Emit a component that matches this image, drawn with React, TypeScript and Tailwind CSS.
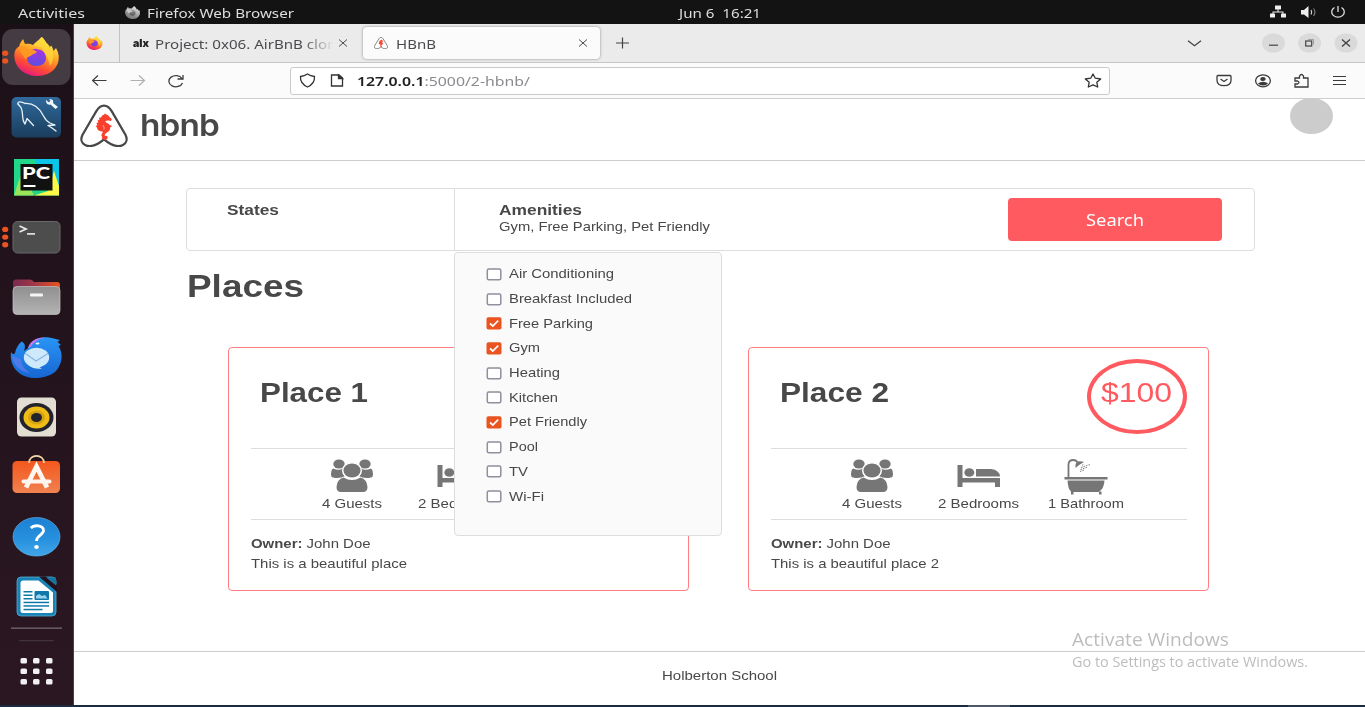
import { useLayoutEffect, useRef, type ReactNode } from "react";

/** Single line of text stretched horizontally to fill the given width. */
function Fit({ w, className = "", children }: { w: number; className?: string; children: ReactNode }) {
  const ref = useRef<HTMLSpanElement>(null);
  useLayoutEffect(() => {
    const el = ref.current;
    if (!el) return;
    el.style.transform = "none";
    el.style.transform = `scaleX(${w / el.getBoundingClientRect().width})`;
  }, [w]);
  return (
    <span className="block shrink-0" style={{ width: w }}>
      <span ref={ref} className={`block w-max origin-left whitespace-pre ${className}`}>
        {children}
      </span>
    </span>
  );
}

const UI = "font-['Noto_Sans',sans-serif]";

function FirefoxShape({ gray = false }: { gray?: boolean }) {
  const id = gray ? "g" : "c";
  const c = gray
    ? ["#e8e8e8", "#b5b5b5", "#8a8a8a", "#777"]
    : ["#fff44f", "#ffa225", "#ff4b34", "#e31587"];
  return (
    <>
      <defs>
        <linearGradient id={`fb${id}`} x1="0.75" y1="0.05" x2="0.3" y2="1">
          <stop offset="0" stopColor={c[0]} />
          <stop offset="0.4" stopColor={c[1]} />
          <stop offset="0.72" stopColor={c[2]} />
          <stop offset="1" stopColor={c[3]} />
        </linearGradient>
        <linearGradient id={`fg${id}`} x1="0.5" y1="0" x2="0.4" y2="1">
          <stop offset="0" stopColor={gray ? "#999" : "#a833e0"} />
          <stop offset="1" stopColor={gray ? "#555" : "#5b4fe0"} />
        </linearGradient>
      </defs>
      <path
        fill={`url(#fb${id})`}
        d="M0.4 20C0 14 2 11 5 9.500L6 6.500L9 2L11 7C14 6.500 17 7 19 8C21 5 25 3.500 27.500 0C30 1 31 5 34.500 8L35.500 11L37 8.500C38.500 10 39.500 13 39.500 14L42 11C45 16 45.500 21 44 26C41 34 33 39 23.500 39C11 39 1 31 0.400 20Z"
      />
      <path
        fill={`url(#fg${id})`}
        d="M14 16C18 12 22 11 24 12.500C28 12 32 16 32 21C32 26 28 29 22.500 29C17 29 13 26 13 21.500C13 19 16 19 18 18C17 17 15 17 14 16Z"
      />
      <path
        fill={gray ? "#c9c9c9" : "#ff9822"}
        d="M5 9.500C9 9 13 9.500 15 13C18 12 21 13 23 15C21 17 18 17 16.500 19C14 20 12 20 12.500 23C9 19 6 15 5 9.500Z"
      />
      {!gray && <path fill="#ffd83b" d="M27.500 0C30 1 31 5 34.500 8C40 13 41 22 36 29C35 22 31 17 28 11C25 9 21 9 20 8.500C22 5 26 4 27.500 0Z" opacity="0.75" />}
    </>
  );
}

function HbnbMark() {
  return (
    <>
      <path
        d="M23.500 1.500C27 1.500 29 3.500 31 7L44.500 30C46.500 34 46 38 42 40C36 43 30 40 23.500 34.500C17 40 11 43 5 40C1 38 0.500 34 2.500 30L16 7C18 3.500 20 1.500 23.500 1.500Z"
        fill="#fff"
        stroke="#484848"
        strokeWidth="2.200"
      />
      <path
        d="M22 11C23.500 10.800 24 10 24.500 9C25 10 25.500 10.200 26.500 10.500C28.500 11 28.500 13 31 14.500C31.500 16 30 17 28.500 16.200C27 15.800 25.500 16 24.800 16.800C25 18.500 28 18.500 29 20.500L31.500 21.500L29.500 23C29.800 26.500 26.500 27.500 24.500 29.500C23.500 31 25 31.500 26 31C27.800 32 27.500 35 24.500 35C22 35 20.800 33.500 21.800 32C19.800 30.500 22 28.500 22.500 27C19 27 16.800 25.500 16.500 23L15.500 21.500L17 20.500L16 18.500L18 18L17.200 16L19 15.500L18.500 13.500L20.500 13.200Z"
        fill="#f8402c"
      />
      <path d="M22.500 20.500Q24 22.500 23.500 25" fill="none" stroke="#fff" strokeWidth="0.500" />
    </>
  );
}

function DockIcon({ children, dots = 0, active = false }: { children: ReactNode; dots?: number; active?: boolean }) {
  const start = 30 - (dots - 1) * 3.8;
  return (
    <svg width="74" height="60" viewBox="0 0 74 60" className="block">
      {active && <rect x="2" y="2" width="68.500" height="56" rx="11" fill="#453b42" />}
      {Array.from({ length: dots }, (_, i) => (
        <ellipse key={i} cx="5.200" cy={start + i * 7.7} rx="3.100" ry="2.700" fill="#e95420" />
      ))}
      {children}
    </svg>
  );
}

function Dock() {
  return (
    <nav className="flex h-[681px] w-[74px] shrink-0 flex-col border-r border-[#4a4048] bg-gradient-to-b from-[#1c1017] to-[#2b1722] pt-[3px]">
      <DockIcon active dots={2}>
        <g transform="translate(14 10)"><FirefoxShape /></g>
      </DockIcon>
      <DockIcon>
        <defs>
          <linearGradient id="my" x1="0" y1="0" x2="0" y2="1"><stop stopColor="#2f6a9c" /><stop offset="1" stopColor="#1a3d5c" /></linearGradient>
        </defs>
        <rect x="11.500" y="10" width="49.500" height="40.500" rx="5" fill="url(#my)" />
        <g fill="none" stroke="#e8f0f6" strokeWidth="1.300" strokeLinejoin="round" strokeLinecap="round">
          <path d="M18 17C17 14 22 14.500 25 16.500C34 16 40 22 43.500 29C45 32 46 34 50 36L55 38L48 38.500L52 41L56 44" />
          <path d="M18 17L21 20.500C24 27 21 32 25 37L27 31.500L33.500 38.500" />
        </g>
        <path d="M46 13L49 15.500L50.500 13.500L49 12.500C52 11.500 54 13.500 53 16L58 20L55.500 22L50.500 17.500C48 18.500 45.500 16 46 13Z" fill="#f2f6f9" />
      </DockIcon>
      <DockIcon>
        <rect x="14" y="12" width="45" height="36.500" fill="#21d789" />
        <path d="M34 12H59V38L50 36Z" fill="#0bc6e8" />
        <path d="M34 48.500L48 44L54 24L59 39V48.500Z" fill="#fcf84a" />
        <path d="M14 48.500L22 24L34 48.500Z" fill="#9be55a" />
        <rect x="20.500" y="17" width="32" height="26.500" fill="#111" />
        <text x="22" y="32" fontFamily="Lato, sans-serif" fontWeight="900" fontSize="17" textLength="28" lengthAdjust="spacingAndGlyphs" fill="#fff">PC</text>
        <rect x="23.500" y="38" width="12" height="2" fill="#fff" />
      </DockIcon>
      <DockIcon dots={3}>
        <rect x="13" y="14.500" width="47" height="31.500" rx="4.500" fill="#4d4d4d" stroke="#686868" />
        <path d="M19.500 19L26 22L19.500 25" fill="none" stroke="#e8e8e8" strokeWidth="1.800" />
        <rect x="27" y="26" width="8" height="1.800" fill="#d8d8d8" />
      </DockIcon>
      <DockIcon>
        <defs>
          <linearGradient id="fo" x1="0" x2="1"><stop stopColor="#7a2a50" /><stop offset="0.450" stopColor="#a03848" /><stop offset="1" stopColor="#e9541f" /></linearGradient>
          <linearGradient id="fl" x1="0" y1="0" x2="0" y2="1"><stop stopColor="#8f8f8f" /><stop offset="1" stopColor="#b4b4b4" /></linearGradient>
        </defs>
        <path d="M13 30V15Q13 12.500 16 12.500H30Q32.500 12.500 34 15H57Q60 15 60 18V30Z" fill="url(#fo)" />
        <rect x="13" y="19.500" width="47" height="28" rx="4" fill="url(#fl)" stroke="#c4c4c4" strokeWidth="0.700" />
        <rect x="30" y="26.500" width="13" height="3" rx="1" fill="#f5f5f5" />
      </DockIcon>
      <DockIcon>
        <defs>
          <linearGradient id="tb" x1="0" y1="0" x2="0" y2="1"><stop stopColor="#2a95f5" /><stop offset="1" stopColor="#1766d2" /></linearGradient>
        </defs>
        <path d="M11 25C12 27 14 28 15 26C16 22 18 17 22 14.500C25.500 17 25.500 20 24 24L28 21C31 13 40 9 49 10.500C53 11 57 12.500 60 13L57.500 15L61 18L58.500 19C64 27 62 38 55 45C44 53 27 53 18 45C12 40 10 32 11 25Z" fill="url(#tb)" />
        <path d="M28 21C30 14 37 10 45 10.500C38 12 33 16 30.500 20Z" fill="#c07af0" />
        <path d="M12 29C13 38 20 45 30 46C24 42 21 37 21 32Z" fill="#6d7df0" opacity="0.6" />
        <ellipse cx="36.500" cy="30.500" rx="12.700" ry="9.800" fill="#cfe9fc" />
        <path d="M28 38Q35 43 42 41.500Q38 40 39 38Z" fill="#cfe9fc" />
        <path d="M25.500 26.500L36 34L48 26.500" fill="none" stroke="#86b6e6" strokeWidth="1.200" />
        <ellipse cx="37.500" cy="16.500" rx="2" ry="1.100" fill="#e6f4ff" />
      </DockIcon>
      <DockIcon>
        <rect x="17" y="10.500" width="39" height="39" rx="4.500" fill="#e3ded2" />
        <ellipse cx="36.500" cy="30.500" rx="17" ry="14.500" fill="#22232b" />
        <ellipse cx="36.500" cy="30.500" rx="13" ry="11" fill="#f0bd16" />
        <ellipse cx="36.500" cy="30.500" rx="8.500" ry="7" fill="#d7a411" />
        <ellipse cx="36.500" cy="30.500" rx="5.500" ry="4.600" fill="#22232b" />
      </DockIcon>
      <DockIcon>
        <defs>
          <linearGradient id="so" x1="0" y1="0" x2="0" y2="1"><stop stopColor="#f4571d" /><stop offset="1" stopColor="#f08250" /></linearGradient>
        </defs>
        <rect x="12.500" y="14" width="47.500" height="32" rx="4.500" fill="url(#so)" />
        <path d="M29 16C29 6.500 44 6.500 44 16" fill="none" stroke="#f4d9a8" strokeWidth="1.600" />
        <path d="M26 40.500L36.500 19.500L47 40.500" fill="none" stroke="#fff6f0" strokeWidth="4.800" />
        <rect x="21.500" y="32.500" width="30" height="4" rx="2" fill="#fff6f0" />
      </DockIcon>
      <DockIcon>
        <defs>
          <linearGradient id="he" x1="0" y1="0" x2="0" y2="1"><stop stopColor="#1c80d4" /><stop offset="0.550" stopColor="#2790dd" /><stop offset="1" stopColor="#41a6ea" /></linearGradient>
        </defs>
        <ellipse cx="36.500" cy="29.800" rx="23.500" ry="19.300" fill="url(#he)" stroke="#6ab8ee" strokeWidth="0.600" />
        <path d="M30.800 21C34 17.500 43.500 18 43.500 23.500C43.500 28 36.500 28.500 36.500 34" fill="none" stroke="#fff" strokeWidth="2.800" />
        <ellipse cx="36.500" cy="40" rx="2.300" ry="2" fill="#fff" />
      </DockIcon>
      <DockIcon>
        <rect x="17" y="10" width="39" height="39" rx="4" fill="#1a83b5" stroke="#54aed4" strokeWidth="0.800" />
        <path d="M20.500 16Q20.500 13.500 23 13.500H38.500L53 25.500V43.500Q53 46 50.500 46H23Q20.500 46 20.500 43.500Z" fill="#fff" />
        <path d="M39 9.500L57 25V18L46 9.500Z" fill="#23121c" />
        <path d="M46 10.500H56V18.500Z" fill="#1a74a0" />
        <g fill="#0f78ab">
          <rect x="23.500" y="24" width="9" height="1.500" /><rect x="23.500" y="27.500" width="9" height="1.500" /><rect x="23.500" y="31" width="9" height="1.500" />
          <rect x="34.500" y="24" width="14.500" height="9" rx="1" />
          <rect x="23.500" y="34.700" width="25.500" height="1.500" /><rect x="23.500" y="38.200" width="25.500" height="1.500" /><rect x="23.500" y="41.800" width="19" height="1.500" />
        </g>
        <path d="M36 31.500V29L39 27L42 29L45 28L47.500 31.500Z" fill="#9bd3ee" />
      </DockIcon>
      <svg width="74" height="78" viewBox="0 0 74 78" className="block">
        <rect x="11" y="0.500" width="51" height="1.300" fill="#75696f" />
        <rect x="19" y="13" width="35" height="1.200" rx="0.600" fill="#41333c" />
        {[34, 44.5, 55].map((y) =>
          [20.5, 33, 46].map((x) => <rect key={`${x}-${y}`} x={x} y={y - 3} width="6.500" height="5.500" rx="1.500" fill="#f2f0f1" />),
        )}
      </svg>
    </nav>
  );
}

function TopBar() {
  return (
    <header className={`flex h-6 items-center bg-[#131313] text-[#dedede] ${UI}`}>
      <div className="w-[18px]" />
      <Fit w={67} className="pt-px text-[13px] leading-6">Activities</Fit>
      <svg className="ml-10 mr-[7px] h-[13px] w-[15px]" viewBox="0 0 45 39"><FirefoxShape gray /></svg>
      <Fit w={147} className="pt-px text-[13px] leading-6">Firefox Web Browser</Fit>
      <div className="w-[385px]" />
      <Fit w={82} className="pt-px text-[13px] leading-6">Jun 6  16:21</Fit>
      <svg className="ml-auto mr-[15px] h-4 w-[80px]" viewBox="0 0 80 16">
        <g fill="#eee">
          <rect x="5" y="1.500" width="6" height="4" rx="0.500" />
          <rect x="0" y="9.500" width="5" height="4" rx="0.500" /><rect x="11" y="9.500" width="5" height="4" rx="0.500" />
          <path d="M7.500 5H8.500V7.500H13.500V10H12.500V8.500H3.500V10H2.500V7.500H7.500Z" />
          <path d="M31 6H34L38.500 2V14L34 10.500H31Z" />
        </g>
        <path d="M41 6Q42.500 8 41 10.500" fill="none" stroke="#ddd" strokeWidth="1.200" />
        <path d="M43.500 4.500Q46.500 8 43.500 12" fill="none" stroke="#888" strokeWidth="1.100" />
        <path d="M64.500 3.500A6.300 5.300 0 1 0 71.500 3.500" fill="none" stroke="#ddd" strokeWidth="1.300" />
        <path d="M68 2V8" stroke="#ddd" strokeWidth="1.300" />
      </svg>
    </header>
  );
}

function Cross({ className = "" }: { className?: string }) {
  return (
    <svg className={`h-2 w-[10px] shrink-0 ${className}`} viewBox="0 0 10 8">
      <path d="M1 0.500L9 7.500M9 0.500L1 7.500" stroke="#4c4c4c" strokeWidth="1" />
    </svg>
  );
}

function TabBar() {
  return (
    <div className={`flex h-[39px] items-center border-b border-[#c6c6c6] bg-[#ebebeb] text-[#4b4b4f] ${UI}`}>
      <div className="flex h-full w-[46px] items-center border-r border-[#c2c2c2]">
        <svg className="ml-[12px] h-[14px] w-[17px]" viewBox="0 0 45 39"><FirefoxShape /></svg>
      </div>
      <div className="flex h-full w-[243px] items-center">
        <div className="w-[13px]" />
        <Fit w={16} className="font-['Inter',sans-serif] text-[11px] leading-[12px] font-black text-[#222]">alx</Fit>
        <div className="w-[6px]" />
        <div className="w-[179px] overflow-hidden [mask-image:linear-gradient(to_right,black_82%,transparent)]">
          <Fit w={190} className="pt-px text-[13px] leading-5">Project: 0x06. AirBnB clone</Fit>
        </div>
        <Cross className="ml-[4px]" />
      </div>
      <div className="flex h-8 w-[237px] items-center rounded-[4px] bg-[#fbfbfb] shadow-[0_0_3px_rgba(0,0,0,0.4)]">
        <svg className="ml-[11px] mr-[8px] h-3 w-[14px]" viewBox="0 0 47 42" preserveAspectRatio="none"><HbnbMark /></svg>
        <Fit w={40} className="pt-px text-[13px] leading-5">HBnB</Fit>
        <Cross className="ml-[142px]" />
      </div>
      <svg className="ml-4 h-3 w-[13px]" viewBox="0 0 13 12"><path d="M0 6H13M6.500 0.500V11.500" stroke="#444" strokeWidth="1.200" /></svg>
      <svg className="ml-[558px] h-[7px] w-[15px]" viewBox="0 0 15 7"><path d="M1 0.800L7.500 5.700L14 0.800" fill="none" stroke="#444" strokeWidth="1.300" /></svg>
      <svg className="ml-auto mr-[7px] h-5 w-[97px]" viewBox="0 0 97 20">
        <g fill="#dadada">
          <ellipse cx="12.500" cy="10" rx="11.500" ry="9.800" /><ellipse cx="48.500" cy="10" rx="11.500" ry="9.800" /><ellipse cx="85" cy="10" rx="11.500" ry="9.800" />
        </g>
        <g fill="none" stroke="#444" strokeWidth="1.200">
          <path d="M8 12.200H17" />
          <rect x="44.700" y="8" width="6" height="5" />
          <path d="M47 6.500H52.500V11.500" stroke="#999" strokeWidth="0.900" />
          <path d="M81 6.500L89 13.500M89 6.500L81 13.500" strokeWidth="1.400" />
        </g>
      </svg>
    </div>
  );
}

function Toolbar() {
  return (
    <div className={`flex h-9 items-center border-b border-[#cfcfcf] bg-[#fbfbfb] ${UI}`}>
      <svg className="ml-[18px] h-4 w-[94px]" viewBox="0 0 94 16" fill="none" strokeWidth="1.200">
        <path d="M14.500 7.500H0.500M6 2.500L0.500 7.500L6 12.500" stroke="#3c3c3c" />
        <path d="M38.500 7.500H52.500M47 2.500L52.500 7.500L47 12.500" stroke="#b0b0b0" />
        <path d="M90 5.500A7 5.600 0 1 0 90.500 10M91 2V6H85.500" stroke="#3c3c3c" strokeWidth="1.300" />
      </svg>
      <div className="ml-[104px] flex h-7 w-[820px] items-center rounded-[3px] border border-[#c9c9c9] bg-white">
        <svg className="ml-2 h-4 w-[58px]" viewBox="0 0 58 16" fill="none" stroke="#333" strokeWidth="1.300">
          <path d="M8.500 1Q11.500 3 15.500 3.500Q16 10.500 8.500 14Q1 10.500 1.500 3.500Q5.500 3 8.500 1Z" />
          <path d="M32.500 2H40L43.500 5V13H32.500Z" />
          <path d="M39.500 2V5.500H43.500Z" fill="#333" />
        </svg>
        <Fit w={173} className="pt-px text-[13px] leading-5 text-[#8b8b90]">
          <b className="font-semibold text-[#222]">127.0.0.1</b>:5000/2-hbnb/
        </Fit>
        <svg className="ml-auto mr-[7px] h-4 w-[18px]" viewBox="0 0 18 16">
          <path d="M9 1L11.300 5.200L16.700 6L12.800 9.200L13.700 14L9 11.800L4.300 14L5.200 9.200L1.300 6L6.700 5.200Z" fill="none" stroke="#333" strokeWidth="1.300" strokeLinejoin="round" />
        </svg>
      </div>
      <svg className="ml-auto mr-[18px] h-4 w-[132px]" viewBox="0 0 132 16" fill="none" stroke="#3a3a3a" strokeWidth="1.300">
        <path d="M2 3.500Q2 2.500 3 2.500H15Q16 2.500 16 3.500V7.200Q16 12.700 9 12.700Q2 12.700 2 7.200Z" />
        <path d="M5.500 6L9 8.500L12.500 6" />
        <ellipse cx="48" cy="7.800" rx="7.400" ry="6" />
        <ellipse cx="48" cy="6" rx="2.700" ry="2.100" fill="#3a3a3a" stroke="none" />
        <path d="M43 10.300Q48 7.300 53 10.300Q51 12.800 48 12.600Q45 12.800 43 10.300Z" fill="#3a3a3a" stroke="none" />
        <path d="M80 5H84.500V3Q86.500 0 88.500 3V5H93V14H80V11H82.500Q85.500 9.500 82.500 8H80Z" />
        <path d="M118 3.500H131M118 7.500H131M118 11.500H131" strokeWidth="1" />
      </svg>
    </div>
  );
}

const amenities: [string, number, boolean][] = [
  ["Air Conditioning", 105, false],
  ["Breakfast Included", 123, false],
  ["Free Parking", 84, true],
  ["Gym", 31, true],
  ["Heating", 51, false],
  ["Kitchen", 49, false],
  ["Pet Friendly", 78, true],
  ["Pool", 29, false],
  ["TV", 19, false],
  ["Wi-Fi", 35, false],
];

function AmenitiesMenu() {
  return (
    <div className="absolute top-[63px] -left-px z-10 h-[284px] w-[268px] rounded-[4px] border border-[#dddddd] bg-[#fafafa] pt-[9px] pl-[31px]">
      {amenities.map(([name, w, on]) => (
        <div key={name} className="flex h-[24.7px] items-center gap-[7px]">
          <svg className="h-[13px] w-4" viewBox="0 0 16 13">
            {on ? (
              <>
                <rect x="0.500" y="0.200" width="15" height="12.400" rx="1.800" fill="#e95420" />
                <path d="M4 6.500L6.800 9L12.200 3.700" fill="none" stroke="#fff" strokeWidth="1.700" />
              </>
            ) : (
              <rect x="1.300" y="1" width="13.500" height="10.800" rx="1.500" fill="#fff" stroke="#8f8f9d" strokeWidth="1.500" />
            )}
          </svg>
          <Fit w={w} className="text-[13.6px] leading-5">{name}</Fit>
        </div>
      ))}
    </div>
  );
}

function Filters() {
  return (
    <section className="ml-[112px] mt-[27px] flex h-[63px] w-[1069px] rounded-[4px] border border-[#dddddd]">
      <div className="w-[268px] border-r border-[#dddddd] pt-[11px] pl-10">
        <Fit w={52} className="text-[14.4px] leading-5 font-bold">States</Fit>
      </div>
      <div className="relative w-[553px] pt-[11px] pl-11">
        <Fit w={83} className="text-[14.4px] leading-5 font-bold">Amenities</Fit>
        <Fit w={211} className="-mt-[3px] text-[13.6px] leading-5">Gym, Free Parking, Pet Friendly</Fit>
        <AmenitiesMenu />
      </div>
      <button className={`mt-[9px] flex h-[43px] w-[214px] items-center justify-center rounded-[4px] bg-[#ff5a5f] text-white ${UI}`}>
        <Fit w={58} className="text-[16.5px] leading-6">Search</Fit>
      </button>
    </section>
  );
}

function GuestsIcon() {
  return (
    <svg className="h-[34px] w-[44px]" viewBox="0 0 44 34" fill="#767676">
      <ellipse cx="9" cy="5" rx="5.700" ry="4.500" /><ellipse cx="35" cy="5" rx="5.700" ry="4.500" />
      <path d="M3 9.500Q9 12 13 9.500L15 17Q10 20 3 18.500Q1 18 1 15.500Q1 11 3 9.500Z" />
      <path d="M41 9.500Q35 12 31 9.500L29 17Q34 20 41 18.500Q43 18 43 15.500Q43 11 41 9.500Z" />
      <ellipse cx="22" cy="11.500" rx="9.300" ry="7.800" stroke="#fff" strokeWidth="1.500" />
      <path d="M13.500 18.500Q22 23.500 30.500 18.500Q37 20 37.500 28Q37.500 33 33 33H11Q6.500 33 6.500 28Q7 20 13.500 18.500Z" />
    </svg>
  );
}

function BedIcon() {
  return (
    <svg className="h-[34px] w-[44px]" viewBox="0 0 44 34" fill="#767676">
      <path d="M0.500 6H5.500V19H43V28H38V23.500H5.500V28H0.500Z" />
      <ellipse cx="12.300" cy="13.500" rx="5" ry="4.300" />
      <path d="M19 10H34Q42.500 11 43 17.500H19Z" />
    </svg>
  );
}

function BathIcon() {
  return (
    <svg className="h-[36px] w-[44px]" viewBox="0 0 44 36" fill="#767676">
      <path d="M4.500 19V5Q5 1 9 1Q12 1 13.500 3" fill="none" stroke="#767676" strokeWidth="1.800" />
      <path d="M11.500 9Q11 3 14 2.500Q17 2 20 3Q16 5 11.500 9Z" />
      <path d="M18 6.500L20 5M17 8.500L26 5.500M16.500 10.500L24 8M16 12.500L20 11" fill="none" stroke="#767676" strokeWidth="0.900" strokeDasharray="1.600 1" />
      <rect x="0.500" y="18" width="43" height="2.500" />
      <path d="M3.500 21.500H40.500Q40 30 35 32.500H37.500V35.500H35V33H9.500V35.500H7V32.500Q4 30 3.500 21.500Z" />
    </svg>
  );
}

function PlaceCard({ title, titleW, text, textW, price }: { title: string; titleW: number; text: string; textW: number; price: string }) {
  return (
    <article className="flex h-[244px] w-[461px] flex-col rounded-[4px] border border-[#ff7e82] px-[21.5px]">
      <div className="flex h-[101px] shrink-0 justify-between border-b border-[#dddddd]">
        <div className="mt-[28px] ml-[9px]">
          <Fit w={titleW} className="text-[26.8px] leading-[35px] font-bold">{title}</Fit>
        </div>
        <div className="mt-[11px] flex h-[75px] w-[100px] justify-center rounded-[50%] border-4 border-[#ff5a5f] pt-[13px] text-[#ff5a5f]">
          <Fit w={71} className="text-[26.8px] leading-[35px]">{price}</Fit>
        </div>
      </div>
      <div className="flex h-[71px] shrink-0 justify-center border-b border-[#dddddd] pt-[10px]">
        <div className="flex w-[107px] flex-col items-center"><div className="h-[35px]"><GuestsIcon /></div><Fit w={60} className="text-[13.6px] leading-5">4 Guests</Fit></div>
        <div className="flex w-[107px] flex-col items-center"><div className="h-[35px]"><BedIcon /></div><Fit w={81} className="text-[13.6px] leading-5">2 Bedrooms</Fit></div>
        <div className="flex w-[107px] flex-col items-center"><div className="h-[35px]"><BathIcon /></div><Fit w={76} className="text-[13.6px] leading-5">1 Bathroom</Fit></div>
      </div>
      <div className="pt-[14px]">
        <Fit w={119.5} className="text-[13.6px] leading-5"><b>Owner:</b> John Doe</Fit>
        <Fit w={textW} className="text-[13.6px] leading-[19px]">{text}</Fit>
      </div>
    </article>
  );
}

export default function App() {
  return (
    <div className="flex h-[707px] w-[1365px] flex-col overflow-hidden bg-white">
      <TopBar />
      <div className="flex h-[681px]">
        <Dock />
        <main className="relative flex w-[1291px] flex-col">
          <TabBar />
          <Toolbar />
          <div className="flex flex-1 flex-col font-['Liberation_Sans',sans-serif] text-[#484848]">
            <header className="flex h-[62px] shrink-0 border-b border-[#cccccc]">
              <svg className="mt-[5px] ml-[6px] h-[43px] w-[48px]" viewBox="0 0 47 42" preserveAspectRatio="none"><HbnbMark /></svg>
              <div className="mt-[6px] ml-[12px]">
                <Fit w={79} className="font-['Inter',sans-serif] text-[30px] leading-[40px] font-semibold tracking-tight">hbnb</Fit>
              </div>
              <div className="mr-8 ml-auto h-[36px] w-[43px] -translate-y-px rounded-[50%] bg-[#cccccc]" />
            </header>
            <Filters />
            <div className="mt-[14px] ml-[113px]">
              <Fit w={117} className="text-[31.5px] leading-[43px] font-bold">Places</Fit>
            </div>
            <div className="mt-[39px] ml-[154px] flex gap-[59px]">
              <PlaceCard title="Place 1" titleW={108} text="This is a beautiful place" textW={156} price="$100" />
              <PlaceCard title="Place 2" titleW={109} text="This is a beautiful place 2" textW={168} price="$100" />
            </div>
            <footer className="mt-auto flex h-[54px] justify-center border-t border-[#cccccc] pt-[14px]">
              <Fit w={115} className="text-[13.6px] leading-5">Holberton School</Fit>
            </footer>
          </div>
          <div className="absolute top-[603px] left-[998px] font-['Open_Sans',sans-serif] text-[#bdbdbd]">
            <Fit w={157} className="text-[18.5px] leading-6">Activate Windows</Fit>
            <Fit w={236} className="text-[14px] leading-[22px]">Go to Settings to activate Windows.</Fit>
          </div>
        </main>
      </div>
      <div className="flex h-[2px] bg-[#1b2b42]">
        <div className="ml-[968px] w-[42px] bg-[#4b5868]" />
      </div>
    </div>
  );
}
